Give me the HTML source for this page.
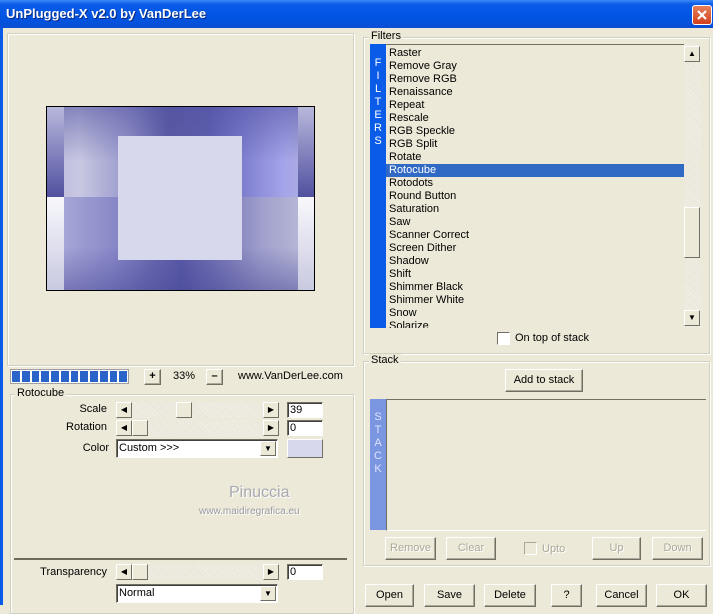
<!DOCTYPE html>
<html><head><meta charset="utf-8"><style>
*{box-sizing:border-box;margin:0;padding:0}
body{width:713px;height:605px;overflow:hidden;background:#ece9d8;font-family:"Liberation Sans",sans-serif;font-size:11px;color:#000;position:relative}
.a{position:absolute}
.title{left:0;top:0;width:713px;height:28px;background:linear-gradient(#3d8af7 0%,#0a5ce8 15%,#0054e3 60%,#0a4fd4 100%)}
.title span{position:absolute;left:6px;top:6px;color:#fff;font-weight:bold;font-size:13px;text-shadow:1px 1px #0a2a80}
.close{left:692px;top:5px;width:20px;height:20px;background:linear-gradient(#e8805a,#d1401c);border:1px solid #fff;border-radius:3px}
.lb{left:0;top:28px;width:3px;height:577px;background:#0a5ce8}
.grp{border:1px solid #d0d0bf;box-shadow:inset 1px 1px #fff,1px 1px #fff}
.btn{background:#ece9d8;border:1px solid;border-color:#fff #716f64 #716f64 #fff;box-shadow:inset -1px -1px #aca899;text-align:center;line-height:20px}
.dis{color:#aca899;text-shadow:1px 1px #fff}
.edit{background:#fff;border:1px solid;border-color:#716f64 #fff #fff #716f64;box-shadow:inset 1px 1px #404040;padding-left:2px;line-height:14px}
.sb{background:repeating-linear-gradient(45deg,#f3f1e8 0 1px,#e6e3d6 1px 2px)}
.sbtn{width:16px;height:16px;background:#ece9d8;border:1px solid;border-color:#fff #716f64 #716f64 #fff;font-size:8px;text-align:center;line-height:14px}
.lab{text-align:right;width:100px}
.item{position:absolute;left:3px;height:13px;line-height:13px;font-size:11px}
</style></head><body>
<div class="a title"><span>UnPlugged-X v2.0 by VanDerLee</span></div>
<div class="a close"><svg width="18" height="18" viewBox="0 0 18 18"><path d="M5 5L13 13M13 5L5 13" stroke="#fff" stroke-width="2.2"/></svg></div>
<div class="a lb"></div>

<div class="a grp" style="left:7px;top:33px;width:347px;height:333px"></div>
<div class="a" style="left:46px;top:106px;width:269px;height:185px;border:1px solid #000;overflow:hidden">
 <div class="a" style="left:0;top:0;width:269px;height:90px;background:linear-gradient(to right,#b8b8da 0%,#c8c8e2 12%,#9898cc 30%,#5a5aa4 45%,#6060b0 60%,#8484d4 75%,#a4a4ea 88%,#b0b0d8 100%)"></div>
 <div class="a" style="left:0;top:0;width:269px;height:90px;background:linear-gradient(rgba(80,80,160,.55),rgba(80,80,160,0) 60%)"></div>
 <div class="a" style="left:0;top:90px;width:269px;height:95px;background:linear-gradient(to right,#b0b0dc 0%,#8888c8 25%,#6868b0 40%,#5858a8 50%,#7878b8 65%,#a0a0cc 80%,#c0c0dc 100%)"></div>
 <div class="a" style="left:0;top:140px;width:269px;height:45px;background:linear-gradient(rgba(70,70,150,0),rgba(70,70,150,.5))"></div>
 <div class="a" style="left:0;top:0;width:17px;height:90px;background:linear-gradient(#b8b8dc,#5050a0)"></div>
 <div class="a" style="left:0;top:90px;width:17px;height:95px;background:linear-gradient(#f8f8fc,#c8c8e0)"></div>
 <div class="a" style="left:251px;top:0;width:18px;height:90px;background:linear-gradient(#b8b8dc,#5050a0)"></div>
 <div class="a" style="left:251px;top:90px;width:18px;height:95px;background:linear-gradient(#f8f8fc,#c8c8e0)"></div>
 <div class="a" style="left:71px;top:29px;width:124px;height:124px;background:#d8d8ec"></div>
</div>

<div class="a" style="left:10px;top:369px;width:119px;height:15px;border:1px solid #a0a0a0;background:#fff;padding:1px;display:flex;gap:2px">
 <i style="display:block;width:8px;background:#2a64c8"></i><i style="display:block;width:8px;background:#2a64c8"></i><i style="display:block;width:8px;background:#2a64c8"></i><i style="display:block;width:8px;background:#2a64c8"></i><i style="display:block;width:8px;background:#2a64c8"></i><i style="display:block;width:8px;background:#2a64c8"></i><i style="display:block;width:8px;background:#2a64c8"></i><i style="display:block;width:8px;background:#2a64c8"></i><i style="display:block;width:8px;background:#2a64c8"></i><i style="display:block;width:8px;background:#2a64c8"></i><i style="display:block;width:8px;background:#2a64c8"></i><i style="display:block;width:8px;background:#2a64c8"></i>
</div>
<div class="a btn" style="left:144px;top:369px;width:17px;height:16px;line-height:13px;font-weight:bold">+</div>
<div class="a" style="left:173px;top:370px">33%</div>
<div class="a btn" style="left:206px;top:369px;width:17px;height:16px;line-height:13px;font-weight:bold">–</div>
<div class="a" style="left:238px;top:370px">www.VanDerLee.com</div>

<div class="a grp" style="left:10px;top:394px;width:344px;height:220px"></div>
<div class="a" style="left:15px;top:387px;background:#ece9d8;padding:0 2px">Rotocube</div>
<div class="a lab" style="left:7px;top:403px">Scale</div>
<div class="a sb" style="left:116px;top:402px;width:164px;height:16px"></div>
<div class="a sbtn" style="left:116px;top:402px">◀</div>
<div class="a sbtn" style="left:176px;top:402px"></div>
<div class="a sbtn" style="left:263px;top:402px">▶</div>
<div class="a edit" style="left:287px;top:402px;width:36px;height:16px">39</div>
<div class="a lab" style="left:7px;top:421px">Rotation</div>
<div class="a sb" style="left:116px;top:420px;width:164px;height:16px"></div>
<div class="a sbtn" style="left:116px;top:420px">◀</div>
<div class="a sbtn" style="left:132px;top:420px"></div>
<div class="a sbtn" style="left:263px;top:420px">▶</div>
<div class="a edit" style="left:287px;top:420px;width:36px;height:16px">0</div>
<div class="a lab" style="left:9px;top:442px">Color</div>
<div class="a edit" style="left:116px;top:439px;width:162px;height:19px;line-height:17px">Custom &gt;&gt;&gt;</div>
<div class="a sbtn" style="left:260px;top:441px;height:15px">▼</div>
<div class="a" style="left:287px;top:439px;width:36px;height:19px;background:#d8d8ec;border:1px solid;border-color:#fff #716f64 #716f64 #fff"></div>
<div class="a" style="left:229px;top:484px;font-size:16px;color:#a8a8b0;text-shadow:1px 1px #fff">Pinuccia</div>
<div class="a" style="left:199px;top:506px;font-size:10px;color:#9a9aa0;text-shadow:1px 1px #fff">www.maidiregrafica.eu</div>
<div class="a" style="left:14px;top:558px;width:333px;height:2px;background:#6e6a5c"></div>
<div class="a lab" style="left:7px;top:566px">Transparency</div>
<div class="a sb" style="left:116px;top:564px;width:164px;height:16px"></div>
<div class="a sbtn" style="left:116px;top:564px">◀</div>
<div class="a sbtn" style="left:132px;top:564px"></div>
<div class="a sbtn" style="left:263px;top:564px">▶</div>
<div class="a edit" style="left:287px;top:564px;width:36px;height:16px">0</div>
<div class="a edit" style="left:116px;top:584px;width:162px;height:19px;line-height:17px">Normal</div>
<div class="a sbtn" style="left:260px;top:586px;height:15px">▼</div>

<div class="a grp" style="left:363px;top:37px;width:347px;height:317px"></div>
<div class="a" style="left:369px;top:30px;background:#ece9d8;padding:0 2px">Filters</div>
<div class="a" style="left:370px;top:44px;width:16px;height:284px;background:#0a5ce8;color:#fff;text-align:center;line-height:13px;padding-top:13px">F<br>I<br>L<br>T<br>E<br>R<br>S</div>
<div class="a" style="left:386px;top:44px;width:298px;height:284px;overflow:hidden;border-top:1px solid #716f64">
<div class="item" style="top:2px">Raster</div>
<div class="item" style="top:15px">Remove Gray</div>
<div class="item" style="top:28px">Remove RGB</div>
<div class="item" style="top:41px">Renaissance</div>
<div class="item" style="top:54px">Repeat</div>
<div class="item" style="top:67px">Rescale</div>
<div class="item" style="top:80px">RGB Speckle</div>
<div class="item" style="top:93px">RGB Split</div>
<div class="item" style="top:106px">Rotate</div>
<div class="item" style="top:119px;left:0;width:298px;padding-left:3px;background:#316ac5;color:#fff">Rotocube</div>
<div class="item" style="top:132px">Rotodots</div>
<div class="item" style="top:145px">Round Button</div>
<div class="item" style="top:158px">Saturation</div>
<div class="item" style="top:171px">Saw</div>
<div class="item" style="top:184px">Scanner Correct</div>
<div class="item" style="top:197px">Screen Dither</div>
<div class="item" style="top:210px">Shadow</div>
<div class="item" style="top:223px">Shift</div>
<div class="item" style="top:236px">Shimmer Black</div>
<div class="item" style="top:249px">Shimmer White</div>
<div class="item" style="top:262px">Snow</div>
<div class="item" style="top:275px">Solarize</div>
</div>
<div class="a sb" style="left:684px;top:44px;width:17px;height:284px"></div>
<div class="a sbtn" style="left:684px;top:46px">▲</div>
<div class="a sbtn" style="left:684px;top:207px;height:51px"></div>
<div class="a sbtn" style="left:684px;top:310px">▼</div>
<div class="a" style="left:497px;top:332px;width:13px;height:13px;background:#fff;border:1px solid;border-color:#716f64 #fff #fff #716f64"></div>
<div class="a" style="left:515px;top:332px">On top of stack</div>

<div class="a grp" style="left:363px;top:361px;width:347px;height:205px"></div>
<div class="a" style="left:369px;top:354px;background:#ece9d8;padding:0 2px">Stack</div>
<div class="a btn" style="left:505px;top:369px;width:78px;height:23px">Add to stack</div>
<div class="a" style="left:370px;top:399px;width:16px;height:131px;background:#7b96e0;color:#dde4ff;text-align:center;line-height:13px;padding-top:12px">S<br>T<br>A<br>C<br>K</div>
<div class="a" style="left:386px;top:399px;width:320px;height:132px;border-top:1px solid #716f64;border-left:1px solid #716f64;border-bottom:1px solid #fff"></div>
<div class="a btn dis" style="left:385px;top:537px;width:51px;height:23px">Remove</div>
<div class="a btn dis" style="left:446px;top:537px;width:50px;height:23px">Clear</div>
<div class="a" style="left:524px;top:542px;width:13px;height:13px;border:1px solid;border-color:#aca899 #fff #fff #aca899"></div>
<div class="a dis" style="left:542px;top:543px">Upto</div>
<div class="a btn dis" style="left:592px;top:537px;width:49px;height:23px">Up</div>
<div class="a btn dis" style="left:652px;top:537px;width:51px;height:23px">Down</div>

<div class="a btn" style="left:365px;top:584px;width:49px;height:23px">Open</div>
<div class="a btn" style="left:424px;top:584px;width:51px;height:23px">Save</div>
<div class="a btn" style="left:484px;top:584px;width:52px;height:23px">Delete</div>
<div class="a btn" style="left:551px;top:584px;width:31px;height:23px">?</div>
<div class="a btn" style="left:596px;top:584px;width:51px;height:23px">Cancel</div>
<div class="a btn" style="left:656px;top:584px;width:51px;height:23px">OK</div>
</body></html>
